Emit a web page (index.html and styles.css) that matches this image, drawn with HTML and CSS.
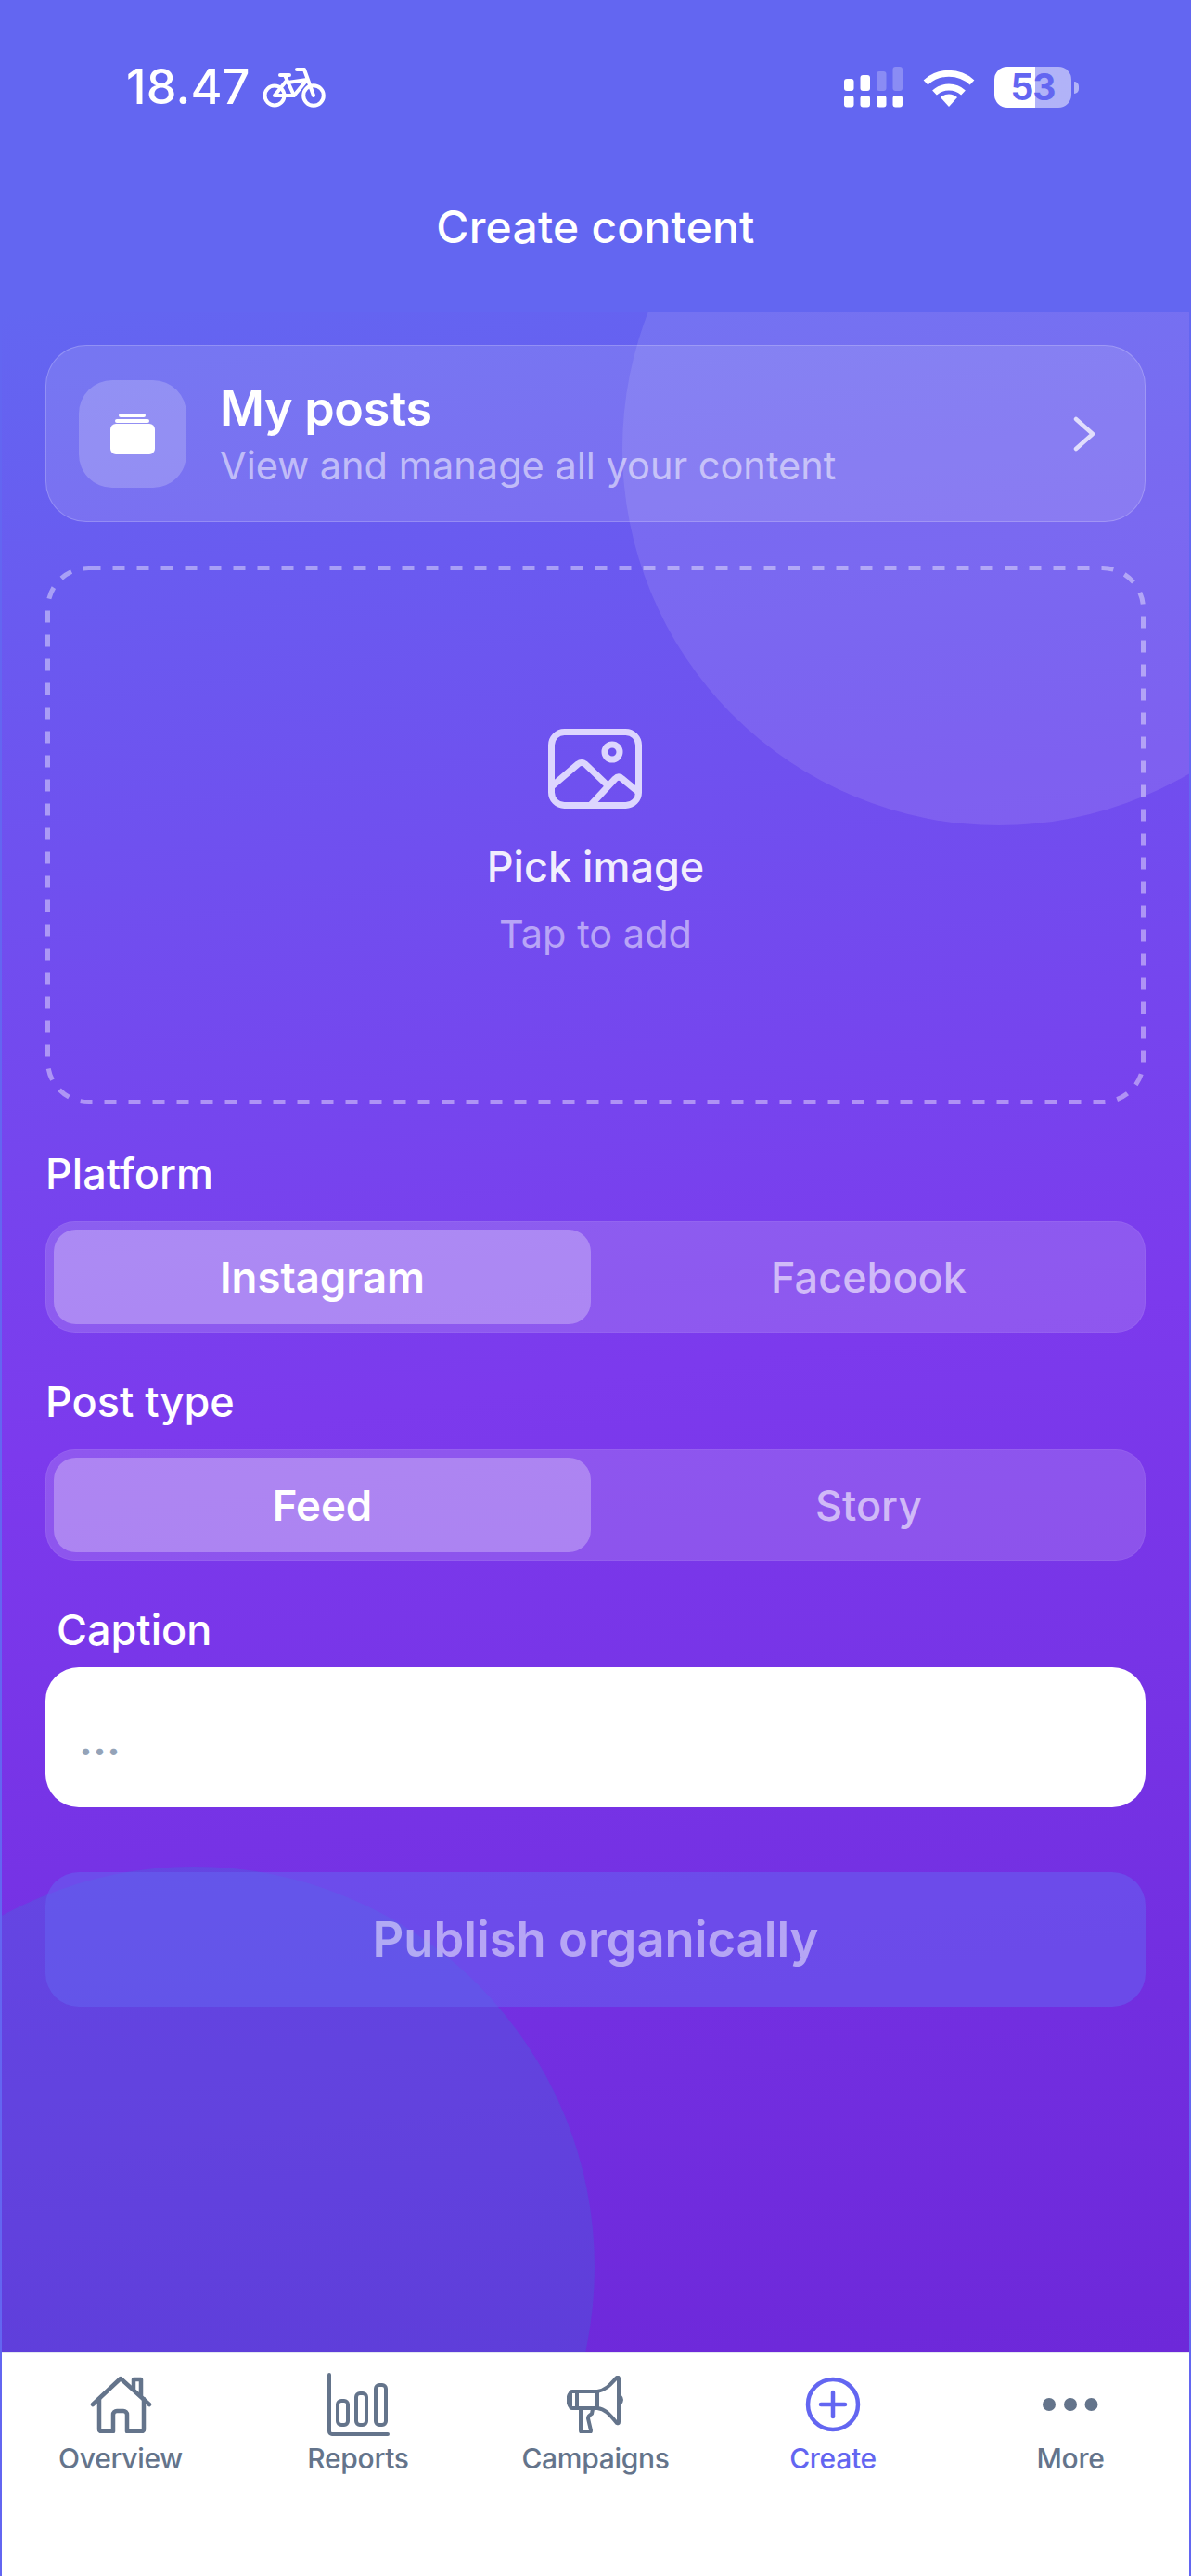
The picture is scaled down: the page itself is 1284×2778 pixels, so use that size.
FILE: index.html
```html
<!DOCTYPE html>
<html lang="en">
<head>
  <meta charset="UTF-8">
  <meta name="viewport" content="width=device-width, initial-scale=1.0">
  <title>Create content</title>
  <link rel="stylesheet" href="styles.css">
</head>
<body>
  <!-- Status bar -->
  <div class="status-bar">
    <div class="status-left">
      <span class="status-time">18.47</span>
      <svg class="icon-bike" viewBox="0 0 67 43" fill="none" stroke="#fff" stroke-width="4" stroke-linecap="round" stroke-linejoin="round">
        <circle cx="12" cy="30" r="10.5"/>
        <circle cx="54" cy="30" r="10.8"/>
        <path d="M36 2h8l10 28"/>
        <path d="M18 8h10"/>
        <path d="M23 8l10 22"/>
        <path d="M26 16l21-3-14 17H12l12-15"/>
      </svg>
    </div>
    <div class="status-right">
      <svg class="icon-signal" viewBox="0 0 63 44" fill="#fff">
        <rect x="0" y="31" width="10.5" height="12.5" rx="3"/>
        <rect x="17.5" y="31" width="10.5" height="12.5" rx="3"/>
        <rect x="35" y="31" width="10.5" height="12.5" rx="3"/>
        <rect x="52.5" y="31" width="10.5" height="12.5" rx="3"/>
        <rect x="0" y="13" width="10.5" height="13" rx="3"/>
        <rect x="17.5" y="9" width="10.5" height="17" rx="3"/>
        <rect x="35" y="5" width="10.5" height="21" rx="3" opacity="0.25"/>
        <rect x="52.5" y="0" width="10.5" height="26" rx="3" opacity="0.25"/>
      </svg>
      <svg class="icon-wifi" viewBox="0 0 56 41" fill="none" stroke="#fff" stroke-width="7">
        <path d="M3 15A37 37 0 0 1 53 15"/>
        <path d="M12.500 26A23 23 0 0 1 43.500 26"/>
        <path d="M28 41L19 31A13 13 0 0 1 37 31Z" fill="#fff" stroke="none"/>
      </svg>
      <div class="battery">53</div>
      <div class="battery-nub"></div>
    </div>
  </div>

  <div class="page-title">Create content</div>

  <div class="content">
    <div class="blob blob-top"></div>
    <div class="blob blob-bottom"></div>

    <!-- My posts -->
    <div class="posts-card">
      <div class="posts-icon">
        <svg viewBox="0 0 48 44" fill="#fff">
          <rect x="9" y="0" width="29" height="4" rx="2"/>
          <rect x="5" y="6" width="37" height="4" rx="2"/>
          <rect x="0" y="11" width="48" height="33" rx="6"/>
        </svg>
      </div>
      <div class="posts-text">
        <div class="posts-title">My posts</div>
        <div class="posts-sub">View and manage all your content</div>
      </div>
      <svg class="chevron" viewBox="0 0 24 38" fill="none" stroke="#fff" stroke-opacity="0.75" stroke-width="4.5" stroke-linecap="round" stroke-linejoin="round">
        <path d="M3 3l18 16L3 35"/>
      </svg>
    </div>

    <!-- Image picker -->
    <div class="picker">
      <svg class="picker-border" fill="none">
        <rect x="2.500" y="2.500" width="1181" height="576" rx="44" stroke="#fff" stroke-opacity="0.42" stroke-width="5" stroke-dasharray="13 13"/>
      </svg>
      <svg class="icon-image" viewBox="0 0 101 86" fill="none" stroke="#ddd6fe" stroke-width="7" stroke-linecap="round" stroke-linejoin="round">
        <rect x="3.500" y="3.500" width="94" height="79" rx="14"/>
        <circle cx="69" cy="25" r="8"/>
        <path d="M4 62l28-24q4-3 8 0l24 23"/>
        <path d="M46 82l26-28q4-4 8 0l17 14"/>
      </svg>
      <div class="picker-title">Pick image</div>
      <div class="picker-sub">Tap to add</div>
    </div>

    <div class="field-label">Platform</div>
    <div class="segment">
      <div class="segment-item active">Instagram</div>
      <div class="segment-item">Facebook</div>
    </div>

    <div class="field-label">Post type</div>
    <div class="segment">
      <div class="segment-item active">Feed</div>
      <div class="segment-item">Story</div>
    </div>

    <div class="field-label caption-label">Caption</div>
    <div class="caption-input">...</div>

    <div class="publish-btn">Publish organically</div>
  </div>

  <!-- Tab bar -->
  <div class="tab-bar">
    <div class="tab">
      <div class="tab-icon">
        <svg width="67" height="62" viewBox="0 0 67 62" fill="none" stroke="#64748b" stroke-width="4.500" stroke-linecap="round" stroke-linejoin="round">
          <path d="M3 31L33 3l31 28"/>
          <path d="M10 25v33a2 2 0 0 0 2 2h13V42a4 4 0 0 1 4-4h7a4 4 0 0 1 4 4v18h16a2 2 0 0 0 2-2V25"/>
          <path d="M47 14V4h8v18"/>
        </svg>
      </div>
      <div class="tab-label">Overview</div>
    </div>
    <div class="tab">
      <div class="tab-icon">
        <svg width="67" height="68" viewBox="0 0 67 68" fill="none" stroke="#64748b" stroke-width="4" stroke-linecap="round" stroke-linejoin="round">
          <path d="M2 2v61a3 3 0 0 0 3 3h60"/>
          <rect x="11" y="30" width="11" height="26" rx="4"/>
          <rect x="31" y="22" width="11" height="34" rx="4"/>
          <rect x="52" y="13" width="11" height="43" rx="4"/>
        </svg>
      </div>
      <div class="tab-label">Reports</div>
    </div>
    <div class="tab">
      <div class="tab-icon">
        <svg width="62" height="62" viewBox="0 0 62 62" fill="none" stroke="#64748b" stroke-width="4" stroke-linecap="round" stroke-linejoin="round">
          <path d="M33 17H6a2 2 0 0 0-2 2v14a2 2 0 0 0 2 2h27z"/>
          <path d="M33 17C44 15 49 7 54 2q2-1 2 1v47q0 2-2 1C49 46 44 36 33 35"/>
          <path d="M11 18v16"/>
          <path d="M3 20q-3 6 0 12"/>
          <path d="M57 22q4 4 0 8"/>
          <path d="M15 36v23q0 2 2 2h7q2 0 2-2l-3-13q0-3 4-5l1-5"/>
        </svg>
      </div>
      <div class="tab-label">Campaigns</div>
    </div>
    <div class="tab tab-active">
      <div class="tab-icon">
        <svg width="60" height="60" viewBox="0 0 60 60" fill="none" stroke="#6366f1" stroke-width="4.500" stroke-linecap="round">
          <circle cx="30" cy="30" r="27"/>
          <path d="M17 30h26M30 17v26"/>
        </svg>
      </div>
      <div class="tab-label">Create</div>
    </div>
    <div class="tab">
      <div class="tab-icon">
        <svg width="60" height="14" viewBox="0 0 60 14" fill="#64748b">
          <circle cx="7" cy="7" r="7"/>
          <circle cx="30" cy="7" r="7"/>
          <circle cx="52.500" cy="7" r="7"/>
        </svg>
      </div>
      <div class="tab-label">More</div>
    </div>
  </div>
</body>
</html>
```

FILE: styles.css
```css
* {
  margin: 0;
  padding: 0;
  box-sizing: border-box;
  font-family: 'Inter', 'Liberation Sans', sans-serif;
}
body {
  background: #6366f1;
  color: #fff;
  width: 1284px;
  height: 2778px;
  padding: 0 2px;
  display: flex;
  flex-direction: column;
  overflow: hidden;
}
/* Status bar */
.status-bar {
  display: flex;
  justify-content: space-between;
  align-items: center;
  height: 46px;
  margin-top: 71px;
  padding: 0 119px 0 134px;
}
.status-left {
  display: flex;
  align-items: center;
  gap: 14px;
}
.status-time {
  font-size: 52px;
  font-weight: 500;
  line-height: 46px;
  letter-spacing: 0.2px;
}
.icon-bike {
  width: 67px;
  height: 43px;
}
.status-right {
  display: flex;
  align-items: center;
}
.icon-signal {
  width: 63px;
  height: 44px;
}
.icon-wifi {
  width: 56px;
  height: 41px;
  margin-left: 22px;
}
.battery {
  width: 83px;
  height: 44px;
  margin-left: 21px;
  border-radius: 14px;
  background: linear-gradient(90deg, #fff 53%, rgba(255, 255, 255, 0.5) 53%);
  color: #6366f1;
  font-size: 39px;
  font-weight: 700;
  line-height: 44px;
  text-align: center;
  letter-spacing: -1px;
}
.battery-nub {
  width: 5px;
  height: 13px;
  margin-left: 3px;
  border-radius: 0 5px 5px 0;
  background: rgba(255, 255, 255, 0.5);
}
.page-title {
  height: 220px;
  padding-top: 99px;
  font-size: 48px;
  font-weight: 500;
  line-height: 58px;
  letter-spacing: 0.2px;
  text-align: center;
}
/* Main area */
.content {
  flex: 1;
  position: relative;
  overflow: hidden;
  padding: 35px 47px 0;
  background: linear-gradient(172deg, #6366f1 0%, #7c3aed 52%, #6d28d9 100%);
}
.content > * {
  position: relative;
}
.content > .blob {
  position: absolute;
  border-radius: 50%;
}
.blob-top {
  width: 812px;
  height: 812px;
  left: 669px;
  top: -259px;
  background: rgba(255, 255, 255, 0.1);
}
.blob-bottom {
  width: 864px;
  height: 864px;
  left: -225px;
  top: 1676px;
  background: rgba(6, 182, 212, 0.15);
}
.posts-card {
  display: flex;
  align-items: center;
  height: 191px;
  padding: 0 53px 0 35px;
  background: rgba(255, 255, 255, 0.12);
  border: 1px solid rgba(255, 255, 255, 0.2);
  border-radius: 44px;
}
.posts-icon {
  display: flex;
  justify-content: center;
  align-items: center;
  width: 116px;
  height: 116px;
  flex-shrink: 0;
  background: rgba(255, 255, 255, 0.2);
  border-radius: 36px;
}
.posts-icon svg {
  width: 48px;
  height: 44px;
}
.posts-text {
  flex: 1;
  margin-left: 36px;
  padding-top: 2px;
}
.posts-title {
  font-size: 52px;
  font-weight: 600;
  line-height: 60px;
  letter-spacing: -0.3px;
}
.posts-sub {
  margin-top: 6px;
  font-size: 41.5px;
  line-height: 50px;
  color: rgba(255, 255, 255, 0.55);
}
.chevron {
  width: 24px;
  height: 38px;
}
.picker {
  display: flex;
  flex-direction: column;
  align-items: center;
  height: 581px;
  margin-top: 47px;
  padding-top: 176px;
}
.picker-border {
  position: absolute;
  top: 0;
  left: 0;
  width: 100%;
  height: 100%;
}
.icon-image {
  width: 101px;
  height: 86px;
  margin-right: 2px;
}
.picker-title {
  margin-top: 36px;
  font-size: 45px;
  font-weight: 500;
  line-height: 54px;
  color: rgba(255, 255, 255, 0.92);
}
.picker-sub {
  margin-top: 20px;
  font-size: 41.5px;
  line-height: 50px;
  color: rgba(255, 255, 255, 0.5);
}
.field-label {
  margin-top: 48px;
  font-size: 45px;
  font-weight: 500;
  line-height: 54px;
}
.segment {
  display: flex;
  gap: 10px;
  height: 120px;
  margin-top: 24px;
  padding: 8px;
  background: rgba(255, 255, 255, 0.15);
  border: 1px solid rgba(255, 255, 255, 0.06);
  border-radius: 32px;
}
.segment-item {
  flex: 1;
  display: flex;
  justify-content: center;
  align-items: center;
  font-size: 45px;
  font-weight: 500;
  color: rgba(255, 255, 255, 0.6);
  border-radius: 24px;
}
.segment-item.active {
  background: rgba(255, 255, 255, 0.28);
  color: #fff;
  font-size: 45.5px;
  font-weight: 600;
}
.caption-label {
  padding-left: 12px;
}
.caption-input {
  height: 151px;
  margin-top: 13px;
  padding: 49px 36px 0;
  background: #fff;
  border-radius: 36px;
  color: #94a3b8;
  font-size: 47px;
  font-weight: 600;
  line-height: 58px;
}
.publish-btn {
  height: 145px;
  margin-top: 70px;
  background: rgba(99, 102, 241, 0.5);
  border-radius: 36px;
  font-size: 52.5px;
  font-weight: 600;
  line-height: 145px;
  text-align: center;
  color: rgba(255, 255, 255, 0.5);
}
/* Tab bar */
.tab-bar {
  display: flex;
  height: 242px;
  padding-top: 20px;
  background: #fff;
  border-top: 1px solid #e2e8f0;
}
.tab {
  flex: 1;
  display: flex;
  flex-direction: column;
  align-items: center;
  color: #64748b;
}
.tab-active {
  color: #6366f1;
}
.tab-icon {
  display: flex;
  justify-content: center;
  align-items: center;
  height: 72px;
}
.tab-label {
  margin-top: 4px;
  font-size: 30px;
  font-weight: 500;
  line-height: 36px;
  letter-spacing: -0.3px;
}
```
